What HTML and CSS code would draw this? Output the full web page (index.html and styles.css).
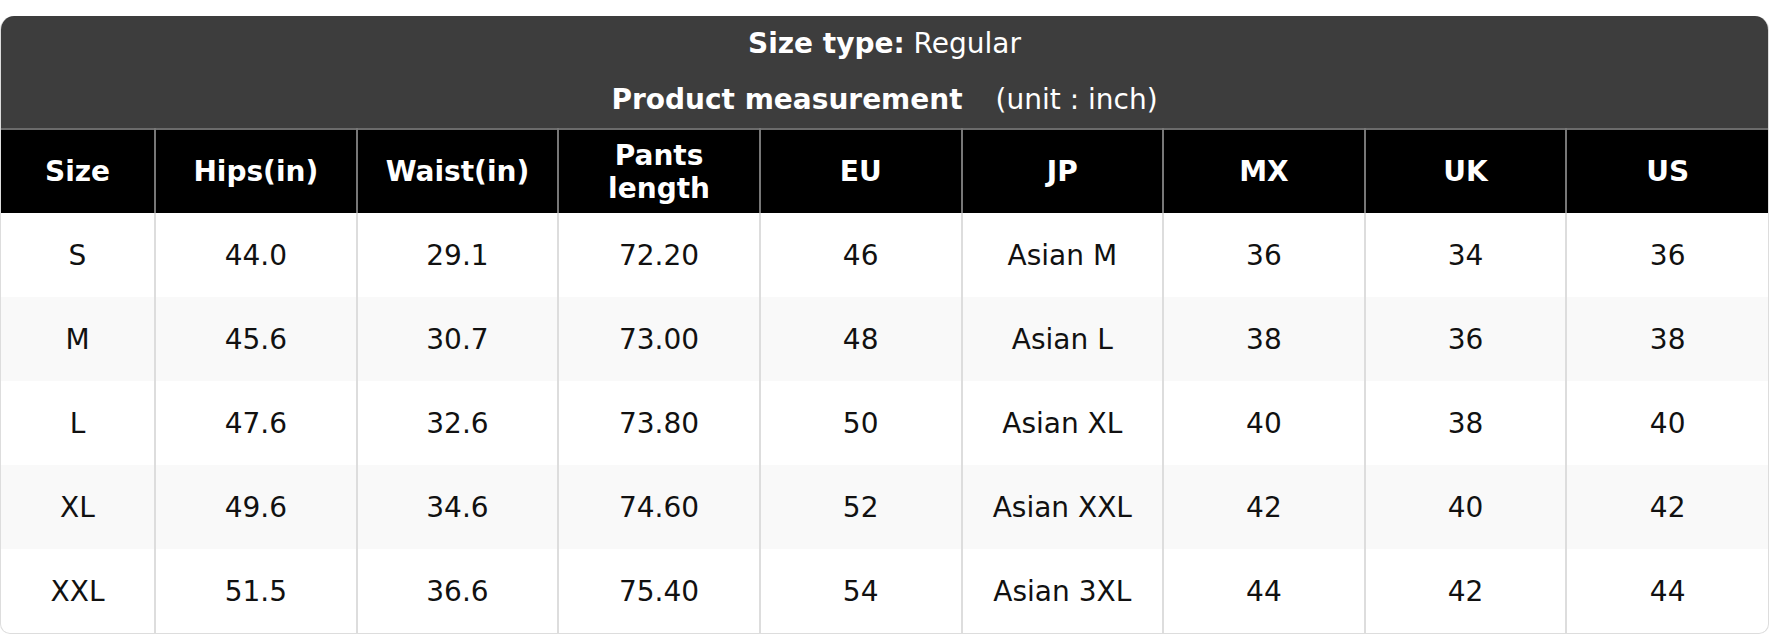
FILE: index.html
```html
<!DOCTYPE html>
<html lang="en">
<head>
<meta charset="utf-8">
<title>Size chart</title>
<link rel="stylesheet" href="styles.css">
</head>
<body>
<div class="card">
  <div class="titles">
    <div class="title-line"><b>Size type:</b> Regular</div>
    <div class="title-line"><b>Product measurement</b><span class="unit">(unit : inch)</span></div>
  </div>
  <table class="chart">
    <colgroup>
      <col class="col-first">
      <col><col><col><col><col><col><col><col>
    </colgroup>
    <thead>
      <tr>
        <th>Size</th><th>Hips(in)</th><th>Waist(in)</th><th>Pants<br>length</th><th>EU</th><th>JP</th><th>MX</th><th>UK</th><th>US</th>
      </tr>
    </thead>
    <tbody>
      <tr><td>S</td><td>44.0</td><td>29.1</td><td>72.20</td><td>46</td><td>Asian M</td><td>36</td><td>34</td><td>36</td></tr>
      <tr><td>M</td><td>45.6</td><td>30.7</td><td>73.00</td><td>48</td><td>Asian L</td><td>38</td><td>36</td><td>38</td></tr>
      <tr><td>L</td><td>47.6</td><td>32.6</td><td>73.80</td><td>50</td><td>Asian XL</td><td>40</td><td>38</td><td>40</td></tr>
      <tr><td>XL</td><td>49.6</td><td>34.6</td><td>74.60</td><td>52</td><td>Asian XXL</td><td>42</td><td>40</td><td>42</td></tr>
      <tr><td>XXL</td><td>51.5</td><td>36.6</td><td>75.40</td><td>54</td><td>Asian 3XL</td><td>44</td><td>42</td><td>44</td></tr>
    </tbody>
  </table>
</div>
</body>
</html>
```

FILE: styles.css
```css
html, body {
  margin: 0;
  padding: 0;
  background: #ffffff;
}
body {
  padding-top: 16px;
  font-family: "DejaVu Sans", "Liberation Sans", sans-serif;
  font-size: 28px;
  color: #111111;
}
.card {
  width: 1769px;
  box-sizing: border-box;
  border: 1px solid #dddddd;
  border-top: none;
  border-radius: 14px 14px 10px 10px;
  overflow: hidden;
  background: #ffffff;
}
.titles {
  background: #3d3d3d;
  color: #ffffff;
  padding: 8px 0 8px;
  display: flex;
  flex-direction: column;
  gap: 16px;
  text-align: center;
}
.title-line {
  height: 40px;
  line-height: 40px;
}
.unit {
  margin-left: 33px;
}
.chart {
  width: 100%;
  border-collapse: collapse;
  table-layout: fixed;
}
.col-first {
  width: 154px;
}
.chart th {
  background: #000000;
  color: #ffffff;
  font-weight: bold;
  height: 81px;
  padding: 2px 0 0;
  line-height: 1.16;
  border-top: 2px solid #6b6b6b;
  border-left: 2px solid #777777;
  border-right: 2px solid #777777;
  text-align: center;
  vertical-align: middle;
}
.chart td {
  height: 84px;
  padding: 0;
  text-align: center;
  vertical-align: middle;
  border-left: 2px solid #dddddd;
  border-right: 2px solid #dddddd;
}
.chart th:first-child,
.chart td:first-child {
  border-left: none;
}
.chart th:last-child,
.chart td:last-child {
  border-right: none;
}
.chart tbody tr:nth-child(even) td {
  background: #f9f9f9;
}
```
